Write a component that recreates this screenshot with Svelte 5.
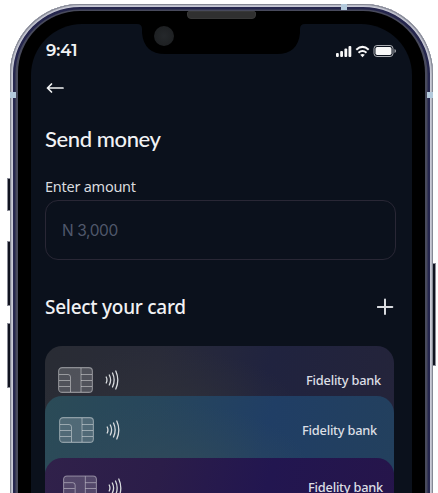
<script>
  const cards = [
    { bank: 'Fidelity bank', kind: 'dark' },
    { bank: 'Fidelity bank', kind: 'blue' },
    { bank: 'Fidelity bank', kind: 'purple' }
  ];
</script>

<div class="stage">
  <i class="key k1"></i><i class="key k2"></i><i class="key k3"></i><i class="key k4"></i>
  <div class="phone">
    <i class="band b1"></i><i class="band b2"></i><i class="band b3"></i>
    <div class="bezel">
      <div class="screen">
        <header class="status">
          <span class="time">9:41</span>
          <svg class="signals" width="62" height="14" viewBox="0 0 62 14" fill="#f8f8f8">
            <rect x="1" y="9" width="2.8" height="4" rx="1" />
            <rect x="5.2" y="7" width="2.8" height="6" rx="1" />
            <rect x="9.4" y="4.5" width="2.8" height="8.5" rx="1" />
            <rect x="13.5" y="2" width="2.8" height="11" rx="1" />
            <g fill="none" stroke="#f8f8f8" stroke-width="2.1">
              <path d="M21.3 5.7Q27.5 .2 33.7 5.7" />
              <path d="M23.5 8.7Q27.5 5.3 31.5 8.7" />
            </g>
            <path d="M25.2 10.7Q27.5 9.1 29.8 10.7L27.5 13.2Z" />
            <rect x="39" y="1.5" width="19" height="11" rx="3" fill="none" stroke="#aaadb2" />
            <rect x="40.5" y="3" width="16" height="8" rx="1.7" />
            <path d="M59.5 5v4q1.5-.6 1.5-2t-1.5-2" fill="#aaadb2" />
          </svg>
        </header>
        <main>
          <svg class="back" width="20" height="12" viewBox="0 0 20 12" fill="none" stroke="#f2f3f4" stroke-width="1.7" stroke-linecap="round" stroke-linejoin="round">
            <path d="M17 6H1.5M5.5 2L1.5 6L5.5 10" />
          </svg>
          <h1>Send money</h1>
          <label for="amount">Enter amount</label>
          <div class="field" id="amount">N 3,000</div>
          <div class="heading">
            <h2>Select your card</h2>
            <svg width="18" height="18" viewBox="0 0 18 18" stroke="#d8dade" stroke-width="2" stroke-linecap="round"><path d="M8 1.5v14.5M.8 9h14.5" /></svg>
          </div>
          <div class="cards">
            {#each cards as card}
              <section class="card {card.kind}">
                <svg class="chip" width="35" height="26" viewBox="0 0 35 26" fill="none" stroke="#ffffff" stroke-opacity=".42">
                  <rect x=".6" y=".6" width="33.8" height="24.8" rx="3.5" fill="#ffffff" fill-opacity=".18" stroke-width="1.1" />
                  <path d="M23 1v24M1 7.5h9q2.5 0 2.5 2.5v15M1 13.5h11M1 19.5h11M23 7.5h11M23 13.5h11M23 19.5h11" />
                </svg>
                <svg class="nfc" width="15" height="20" viewBox="0 0 15 20" fill="none" stroke="#d7dadd" stroke-width="1.3" stroke-linecap="round">
                  <path d="M1.2 7Q2.7 10 1.2 13M4.3 5Q6.9 10 4.3 15M7.5 3Q10.8 10 7.5 17M10.8 1Q14.8 10 10.8 19" />
                </svg>
                <span class="bank">{card.bank}</span>
              </section>
            {/each}
          </div>
        </main>
      </div>
    </div>
    <div class="notch">
      <svg width="168" height="36" viewBox="0 0 168 36"><path d="M0 0H168V3Q163 3 163 8V12Q161 33 140 33H28Q7 33 5 12V8Q5 3 0 3Z" fill="#000" /></svg>
      <i class="camera"></i>
    </div>
    <i class="speaker"></i>
  </div>
</div>

<style>
  :global(body) { margin: 0; background: #fff; }
  * { box-sizing: border-box; }
  .stage { position: relative; width: 438px; height: 493px; overflow: hidden; background: #fff; font-family: "Noto Sans", sans-serif; color: #f1f2f4; }
  .phone { position: relative; width: 423px; height: 650px; margin: 4px 0 0 10px; padding: 7px 8px; border-radius: 70px; background: #484a5c; box-shadow: inset 0 0 0 1px #858894, inset 0 0 0 2px #b9bbc6, inset 0 0 0 3px #c9cad6, inset 0 0 0 5.5px #25264d; }
  .bezel { height: 620px; padding: 13px 13px 0; border-radius: 62px; background: #000; }
  .screen { height: 600px; border-radius: 51px; background: #0b111c; overflow: hidden; }
  .status { display: flex; justify-content: space-between; height: 55px; padding: 17px 15px 0 15px; }
  .time { font: 600 16.5px/18px Montserrat, "Open Sans", sans-serif; }
  .signals { margin-top: 3px; }
  main { padding: 0 17px 0 14px; }
  svg { display: block; flex: none; }
  .back { margin: 3px 0 0 1px; }
  h1, h2 { margin: 0; white-space: nowrap; }
  h1 { font: 500 22px/30px Lato, sans-serif; letter-spacing: -.4px; margin-top: 30px; }
  label { display: block; margin-top: 22px; font-size: 14.5px; line-height: 20px; letter-spacing: -.25px; color: #d9dbdf; }
  .field { height: 60px; width: 351px; margin-top: 4px; padding-left: 16px; border: 1.5px solid #292735; border-radius: 13px; font: 15.5px/59px Inter, sans-serif; letter-spacing: -.4px; color: #50586b; }
  .heading { display: flex; justify-content: space-between; align-items: center; height: 30px; margin-top: 32px; }
  h2 { font-size: 19px; font-weight: 500; line-height: 30px; letter-spacing: -.27px; }
  .cards { margin-top: 24px; }
  .card { display: flex; height: 80px; align-items: flex-start; width: 349px; padding: 21px 13px 0; border-radius: 17px; }
  .dark { background: radial-gradient(ellipse 140px 70px at 34% 90%, #2f3139, #2f313900), linear-gradient(105deg, #292c34, #292b39 32%, #20233f 62%, #24243a); }
  .blue { margin-top: -30px; padding-left: 14px; padding-right: 17px; height: 90px; background: radial-gradient(ellipse 150px 75px at 34% 90%, #304a59, #304a5900), linear-gradient(105deg, #2b4b57, #27465c 32%, #203e65 62%, #23405d); }
  .purple { margin-top: -28px; padding-top: 17px; padding-left: 18px; padding-right: 11px; background: linear-gradient(105deg, #30214a, #2b1d49 32%, #221650 62%, #26154a); }
  .nfc { margin: 3px 0 0 12px; }
  .purple .chip { width: 34px; }
  .purple .nfc { margin-left: 11px; }
  .bank { margin-left: auto; margin-top: 3px; font-size: 12.8px; line-height: 20px; font-weight: 500; letter-spacing: -.22px; color: #dcdfe5; }
  .purple .bank { margin-top: 2px; }
  .notch { position: absolute; top: 17px; left: 127px; }
  .camera { position: absolute; left: 17px; top: 5px; width: 20px; height: 20px; border-radius: 50%; background: radial-gradient(#25282b, #1b1d1f); }
  .speaker { position: absolute; left: 177px; top: 7px; width: 69px; height: 8px; border-radius: 2px 2px 4px 4px; background: #303030; border: 1px solid #383838; }
  .band { position: absolute; background: #b4cadc; }
  .b1 { left: 331px; top: 0; width: 6px; height: 6px; }
  .b2 { left: 0; top: 88px; width: 6px; height: 6px; }
  .b3 { right: 0; top: 88px; width: 6px; height: 6px; }
  .key { position: absolute; width: 5px; left: 7px; background: #11131f; border: 1px solid #8b8d98; }
  .k1 { top: 178px; height: 33px; }
  .k2 { top: 241px; height: 65px; }
  .k3 { top: 323px; height: 65px; }
  .k4 { left: 431px; top: 263px; height: 103px; }
</style>
